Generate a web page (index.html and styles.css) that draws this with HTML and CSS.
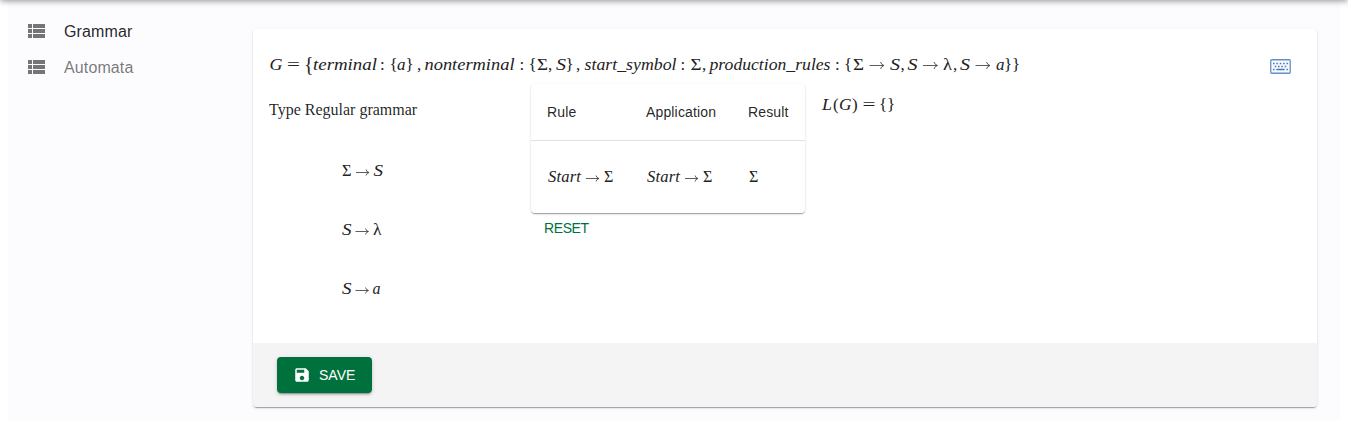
FILE: index.html
```html
<!DOCTYPE html>
<html lang="en">
<head>
<meta charset="utf-8">
<title>Grammar</title>
<link rel="stylesheet" href="styles.css">
</head>
<body>
<div class="page">
  <nav class="sidebar">
    <a class="nav-item active"><svg class="nav-icon" viewBox="0 0 17 14"><path d="M0 0h4v4H0zM5 0h12v4H5zM0 5h4v4H0zM5 5h12v4H5zM0 10h4v4H0zM5 10h12v4H5z"/></svg>Grammar</a>
    <a class="nav-item"><svg class="nav-icon" viewBox="0 0 17 14"><path d="M0 0h4v4H0zM5 0h12v4H5zM0 5h4v4H0zM5 5h12v4H5zM0 10h4v4H0zM5 10h12v4H5z"/></svg>Automata</a>
  </nav>
  <main class="card">
    <div class="content">
      <div class="formula-row">
        <svg class="math" width="754" height="28">
          <g class="it">
            <text x="0.5" y="20" textLength="13" lengthAdjust="spacingAndGlyphs">G</text>
            <text x="44" y="20" textLength="64" lengthAdjust="spacingAndGlyphs">terminal</text>
            <text x="128" y="20" textLength="8.5" lengthAdjust="spacingAndGlyphs">a</text>
            <text x="155.5" y="20" textLength="90" lengthAdjust="spacingAndGlyphs">nonterminal</text>
            <text x="287" y="20" textLength="10" lengthAdjust="spacingAndGlyphs">S</text>
            <text x="315.5" y="20" textLength="92" lengthAdjust="spacingAndGlyphs">start_symbol</text>
            <text x="440.5" y="20" textLength="121" lengthAdjust="spacingAndGlyphs">production_rules</text>
            <text x="621" y="20" textLength="10" lengthAdjust="spacingAndGlyphs">S</text>
            <text x="638.5" y="20" textLength="10" lengthAdjust="spacingAndGlyphs">S</text>
            <text x="691" y="20" textLength="10" lengthAdjust="spacingAndGlyphs">S</text>
            <text x="727" y="20" textLength="8.5" lengthAdjust="spacingAndGlyphs">a</text>
          </g>
          <text x="18" y="20" textLength="13" lengthAdjust="spacingAndGlyphs">=</text>
          <text class="tall" x="35" y="21">{</text>
          <text x="111" y="20">:</text><text x="120.5" y="20">{</text><text x="136.5" y="20">}</text><text x="148" y="20">,</text>
          <text x="250.5" y="20">:</text><text x="259.5" y="20">{</text><text x="268" y="20" textLength="11" lengthAdjust="spacingAndGlyphs">Σ</text><text x="279" y="20">,</text><text x="296.5" y="20">}</text><text x="307" y="20">,</text>
          <text x="411.5" y="20">:</text><text x="421.5" y="20" textLength="11" lengthAdjust="spacingAndGlyphs">Σ</text><text x="433" y="20">,</text>
          <text x="566" y="20">:</text><text x="575" y="20">{</text><text x="584" y="20" textLength="11" lengthAdjust="spacingAndGlyphs">Σ</text>
          <path class="arrow" d="M600.5 15.5h14M611.5 12q.8 2.8 3.5 3.5q-2.7.7-3.5 3.5"/><text x="631.5" y="20">,</text>
          <path class="arrow" d="M654 15.5h14M665 12q.8 2.8 3.5 3.5q-2.7.7-3.5 3.5"/><text x="674" y="20" textLength="9" lengthAdjust="spacingAndGlyphs">λ</text><text x="684" y="20">,</text>
          <path class="arrow" d="M706.5 15.5h14M717.5 12q.8 2.8 3.5 3.5q-2.7.7-3.5 3.5"/><text x="735" y="20">}</text><text x="743" y="20">}</text>
        </svg>
        <svg class="keyboard" width="21" height="15" viewBox="0 0 21 15"><rect x=".75" y=".75" width="19.5" height="13.5" rx="1"/><path d="M3 4.5h1.6M6.3 4.5h1.6M9.7 4.5h1.6M13.1 4.5h1.6M16.5 4.5h1.6M4.7 7.5h1.6M8 7.5h1.6M11.3 7.5h1.6M14.7 7.5h1.6M3 10.5h1.6M6.3 10.5h8.4M16.5 10.5h1.6"/></svg>
      </div>
      <div class="columns">
        <section class="rules">
          <p class="type">Type Regular grammar</p>
          <div class="rule"><svg class="math small" width="46" height="22"><text x="1" y="16" textLength="9.5" lengthAdjust="spacingAndGlyphs">Σ</text><path class="arrow" d="M15 12.5h12.5M25 9.5q.7 2.5 3 3q-2.3.5-3 3"/><text class="it" x="32.5" y="16" textLength="9.5" lengthAdjust="spacingAndGlyphs">S</text></svg></div>
          <div class="rule"><svg class="math small" width="46" height="22"><text class="it" x="1" y="16" textLength="9.5" lengthAdjust="spacingAndGlyphs">S</text><path class="arrow" d="M14.5 12.5H27M24.5 9.5q.7 2.5 3 3q-2.3.5-3 3"/><text x="32" y="16" textLength="8.5" lengthAdjust="spacingAndGlyphs">λ</text></svg></div>
          <div class="rule"><svg class="math small" width="46" height="22"><text class="it" x="1" y="16" textLength="9.5" lengthAdjust="spacingAndGlyphs">S</text><path class="arrow" d="M14.5 12.5H27M24.5 9.5q.7 2.5 3 3q-2.3.5-3 3"/><text class="it" x="31.5" y="16" textLength="8" lengthAdjust="spacingAndGlyphs">a</text></svg></div>
        </section>
        <section class="derivation">
          <div class="table">
            <div class="row head"><span>Rule</span><span>Application</span><span>Result</span></div>
            <div class="row body">
              <span><svg class="math small" width="68" height="22"><text class="it" x="1" y="16" textLength="33" lengthAdjust="spacingAndGlyphs">Start</text><path class="arrow" d="M39 12.5h12.5M49 9.5q.7 2.5 3 3q-2.3.5-3 3"/><text x="57" y="16" textLength="9.5" lengthAdjust="spacingAndGlyphs">Σ</text></svg></span>
              <span><svg class="math small" width="68" height="22"><text class="it" x="1" y="16" textLength="33" lengthAdjust="spacingAndGlyphs">Start</text><path class="arrow" d="M39 12.5h12.5M49 9.5q.7 2.5 3 3q-2.3.5-3 3"/><text x="57" y="16" textLength="9.5" lengthAdjust="spacingAndGlyphs">Σ</text></svg></span>
              <span><svg class="math small" width="14" height="22"><text x="1" y="16" textLength="9.5" lengthAdjust="spacingAndGlyphs">Σ</text></svg></span>
            </div>
          </div>
          <button class="reset">RESET</button>
        </section>
        <svg class="math language" width="80" height="28"><text class="it" x="1" y="20" textLength="10" lengthAdjust="spacingAndGlyphs">L</text><text x="12" y="20">(</text><text class="it" x="18" y="20" textLength="12.5" lengthAdjust="spacingAndGlyphs">G</text><text x="31" y="20">)</text><text x="41.5" y="20" textLength="13" lengthAdjust="spacingAndGlyphs">=</text><text x="58" y="20">{</text><text x="66" y="20">}</text></svg>
      </div>
    </div>
    <footer class="actions">
      <button class="save"><svg width="18" height="18" viewBox="0 0 24 24"><path d="M17 3H5c-1.11 0-2 .9-2 2v14c0 1.1.89 2 2 2h14c1.1 0 2-.9 2-2V7l-4-4zm-5 16c-1.66 0-3-1.34-3-3s1.34-3 3-3 3 1.34 3 3-1.34 3-3 3zm3-10H5V5h10v4z"/></svg>SAVE</button>
    </footer>
  </main>
</div>
</body>
</html>
```
FILE: styles.css
```css
* { box-sizing: border-box; }
body {
  margin: 0;
  height: 421px;
  padding: 0 8px;
  overflow: hidden;
  background: #fff;
  font-family: "Liberation Sans", Arial, sans-serif;
  color: rgba(0, 0, 0, .87);
}
/* Shadow cast by the app bar above the viewport */
body::before {
  content: "";
  position: absolute;
  left: 0;
  right: 0;
  top: -11px;
  height: 10px;
  box-shadow: 0 2px 4px -1px rgba(0,0,0,.2), 0 4px 5px rgba(0,0,0,.14), 0 1px 10px rgba(0,0,0,.12);
}
.page { display: flex; height: 421px; background: #fcfcff; }
.sidebar { width: 245px; padding: 14px 0 0 20px; flex: none; }
.nav-item { display: flex; align-items: center; gap: 19px; height: 36px; font-size: 16px; letter-spacing: .12px; color: rgba(0,0,0,.54); }
.nav-item.active { color: rgba(0,0,0,.87); }
.nav-icon { width: 17px; height: 14px; margin-top: -2px; fill: #757575; }
.card {
  display: flex;
  flex-direction: column;
  width: 1064px;
  height: 378px;
  margin-top: 29px;
  background: #fff;
  border-radius: 4px;
  overflow: hidden;
  box-shadow: 0 2px 1px -1px rgba(0,0,0,.2), 0 1px 1px rgba(0,0,0,.14), 0 1px 3px rgba(0,0,0,.12);
}
.content { height: 314px; padding: 21px 26px 0 16px; }
.formula-row { display: flex; justify-content: space-between; height: 34px; }
.math { display: block; overflow: visible; font: 17px "Liberation Serif", "Times New Roman", serif; fill: #222; }
.math.small { font-size: 16px; }
.it { font-style: italic; }
.tall { font-size: 20px; }
.arrow { fill: none; stroke: #333; stroke-width: .8; }
.keyboard { margin-top: 9px; fill: #f8fafd; stroke: #6590c7; stroke-width: 1.3; }
.keyboard path { stroke: #4a7ab8; stroke-width: 1.5; }
.columns { display: flex; align-items: flex-start; }
.rules { width: 262px; }
.type { margin: 17px 0 41px; font: 16px/18px "Liberation Serif", "Times New Roman", serif; }
.rule { height: 59px; padding-left: 72px; }
.derivation { width: 274px; }
.table { height: 129px; border-radius: 4px; box-shadow: 0 2px 1px -1px rgba(0,0,0,.2), 0 1px 1px rgba(0,0,0,.14), 0 1px 3px rgba(0,0,0,.12); }
.row { display: grid; grid-template-columns: 99px 102px 1fr; align-items: center; padding-left: 16px; font-size: 14px; letter-spacing: .15px; }
.head { height: 57px; border-bottom: 1px solid #e0e0e0; }
.body { height: 71px; }
.reset { display: block; height: 29px; padding: 0 13px; border: 0; background: none; color: #00713d; font: 14px "Liberation Sans", Arial, sans-serif; letter-spacing: -.4px; }
.language { margin: 6px 0 0 16px; }
.actions { display: flex; align-items: center; height: 64px; padding-left: 24px; background: #f4f4f4; }
.save {
  display: flex; align-items: center; gap: 8px;
  width: 95px; height: 36px; padding: 0 16px;
  border: 0; border-radius: 4px; background: #00713d; color: #fff;
  font: 14px "Liberation Sans", Arial, sans-serif;
  box-shadow: 0 3px 1px -2px rgba(0,0,0,.2), 0 2px 2px rgba(0,0,0,.14), 0 1px 5px rgba(0,0,0,.12);
}
.save svg { flex: none; fill: #fff; }
```
